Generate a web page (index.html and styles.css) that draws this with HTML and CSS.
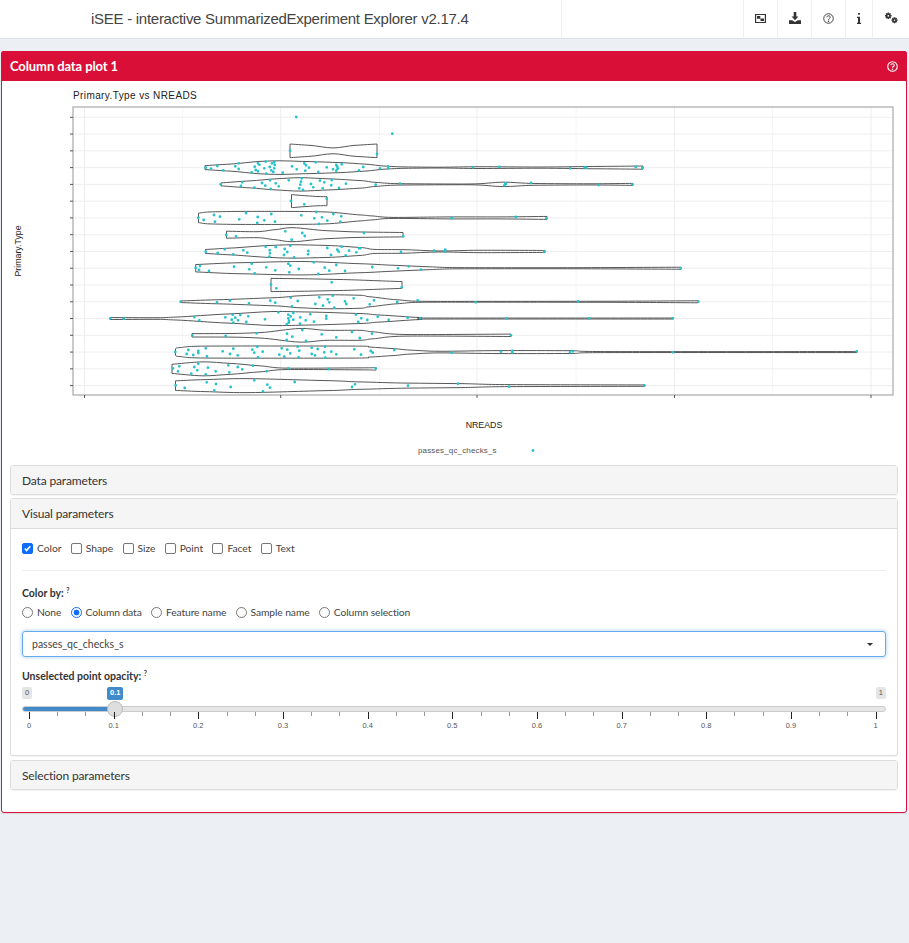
FILE: index.html
```html
<!DOCTYPE html>
<html lang="en">
<head>
<meta charset="utf-8">
<title>iSEE</title>
<link rel="stylesheet" href="styles.css">
</head>
<body>
<header class="navbar">
  <div class="brand">iSEE - interactive SummarizedExperiment Explorer v2.17.4</div>
  <nav class="tools">
    <a class="tool t-img"><svg viewBox="0 0 12 12" width="11" height="11"><path class="ic" fill-rule="evenodd" d="M0 1h12v10H0zM1.300 2.300v7.400h9.400V2.300z"/><path class="ic" d="M2.200 3.200h3.600v3H2.200zM6 6h3.800v2.800H6z"/></svg></a>
    <a class="tool t-dl"><svg viewBox="0 0 12 12" width="12" height="12"><path class="ic" d="M4.700 0h2.600v4.600h2.100L6 8.200 2.600 4.600h2.100zM0 8.200h3.200L6 10l2.800-1.800H12V12H0z"/></svg></a>
    <a class="tool t-q"><svg viewBox="0 0 12 12" width="11" height="11"><circle class="ln" cx="6" cy="6" r="5.200"/><path class="ln" d="M4.200 4.700C4.300 2.500 7.900 2.500 7.900 4.600 7.900 6 6 6 6 7.400"/><path class="ic" d="M5.300 8.300h1.400v1.400H5.300z"/></svg></a>
    <a class="tool t-i"><svg viewBox="0 0 6 12" width="6" height="11"><path class="ic" d="M2 0h2v2H2zM0.800 4h3.300v6.500h1.100V12H0.800v-1.500h1.100V5.500H.8z"/></svg></a>
    <a class="tool t-c"><svg viewBox="0 0 14 12" width="14" height="12"><g class="ln thick"><circle cx="4.300" cy="3.800" r="1.700"/><path d="M4.300 0.500v1.200M4.300 5.900v1.200M1 3.800h1.200M6.400 3.800h1.200M2 1.500l.8.800M5.800 5.300l.8.800M6.600 1.500l-.8.800M2.800 5.300l-.8.800"/><circle cx="10.500" cy="8.200" r="1.500"/><path d="M10.500 5.200v1.200M10.500 10v1.200M7.500 8.200h1.200M12.300 8.200h1.200M8.400 6.100l.8.800M11.800 9.500l.8.800M12.600 6.100l-.8.800M9.200 9.500l-.8.800"/></g></svg></a>
  </nav>
</header>

<main class="content">
  <section class="box">
    <div class="box-header">
      <h3 class="box-title">Column data plot 1</h3>
      <svg class="help" viewBox="0 0 12 12" width="11" height="11"><circle class="ln-w" cx="6" cy="6" r="5.200"/><path class="ln-w" d="M4.200 4.700C4.300 2.500 7.900 2.500 7.900 4.600 7.900 6 6 6 6 7.400"/><path class="fill-w" d="M5.300 8.300h1.400v1.400H5.300z"/></svg>
    </div>
    <div class="box-body">
      <svg id="plot" class="plot" viewBox="0 0 905 384" width="905" height="384">
        <text class="p-title" x="72" y="18">Primary.Type vs NREADS</text>
        <text class="p-axis" transform="translate(20 170) rotate(-90)" text-anchor="middle">Primary.Type</text>
        <text class="p-axis" x="483" y="347" text-anchor="middle">NREADS</text>
        <text class="p-legend" x="417" y="372">passes_qc_checks_s</text>
        <circle class="p-legdot" cx="532" cy="369.500" r="1.400"/>
        <g id="grid"></g>
        <g id="violins"></g>
        <g id="points"></g>
        <rect class="p-frame" x="72" y="26" width="820" height="288"/>
        <g id="ticks"></g>
      </svg>

      <div class="panel first">
        <div class="panel-heading">Data parameters</div>
      </div>

      <div class="panel">
        <div class="panel-heading open">Visual parameters</div>
        <div class="panel-body">
          <div class="checks">
            <label class="opt"><input type="checkbox" checked>Color</label>
            <label class="opt"><input type="checkbox">Shape</label>
            <label class="opt"><input type="checkbox">Size</label>
            <label class="opt"><input type="checkbox">Point</label>
            <label class="opt"><input type="checkbox">Facet</label>
            <label class="opt"><input type="checkbox">Text</label>
          </div>
          <hr class="rule">
          <div class="field-label">Color by: <sup>?</sup></div>
          <div class="radios">
            <label class="opt"><input type="radio" name="c">None</label>
            <label class="opt"><input type="radio" name="c" checked>Column data</label>
            <label class="opt"><input type="radio" name="c">Feature name</label>
            <label class="opt"><input type="radio" name="c">Sample name</label>
            <label class="opt"><input type="radio" name="c">Column selection</label>
          </div>
          <div class="select"><span>passes_qc_checks_s</span><i class="caret"></i></div>
          <div class="field-label op">Unselected point opacity: <sup>?</sup></div>
          <div class="slider">
            <div class="caps"><span class="cap">0</span><span class="cap">1</span></div>
            <span class="cap cur">0.1</span>
            <div class="track"><div class="fill"></div></div>
            <span class="handle"></span>
            <div class="scale">
              <b class="mj"><em>0</em></b><b></b><b></b><b class="mj"><em>0.1</em></b><b></b><b></b><b class="mj"><em>0.2</em></b><b></b><b></b><b class="mj"><em>0.3</em></b><b></b><b></b><b class="mj"><em>0.4</em></b><b></b><b></b><b class="mj"><em>0.5</em></b><b></b><b></b><b class="mj"><em>0.6</em></b><b></b><b></b><b class="mj"><em>0.7</em></b><b></b><b></b><b class="mj"><em>0.8</em></b><b></b><b></b><b class="mj"><em>0.9</em></b><b></b><b></b><b class="mj"><em>1</em></b>
            </div>
          </div>
        </div>
      </div>

      <div class="panel">
        <div class="panel-heading">Selection parameters</div>
      </div>
    </div>
  </section>
</main>
<script src="plot.js"></script>
</body>
</html>
```
FILE: styles.css
```css
* { box-sizing: border-box; }
html, body { margin: 0; padding: 0; }
body {
  background: #ecf0f5;
  color: #333;
  font-family: "Lato", "Noto Sans", sans-serif;
  width: 909px;
  height: 943px;
  overflow: hidden;
}
.navbar {
  height: 39px;
  background: #fff;
  border-bottom: 1px solid #dfe3e8;
  display: flex;
  justify-content: space-between;
  padding-left: 91px;
}
.brand {
  font-family: "Liberation Sans", sans-serif;
  font-size: 15px;
  letter-spacing: -.27px;
  line-height: 37px;
  color: #444;
  width: 471px;
  border-right: 1px solid #eef0f2;
}
.tools { display: flex; }
.tool {
  display: flex;
  align-items: center;
  justify-content: center;
  height: 38px;
  padding-bottom: 2px;
  border-left: 1px solid #eef0f2;
}
.t-img, .t-dl, .t-q { width: 34px; }
.t-i { width: 27px; }
.t-c { width: 37px; }
.ic { fill: #333; }
.ln { fill: none; stroke: #333; stroke-width: 1; }
.thick { stroke-width: 1.600; }
.ln-w { fill: none; stroke: #fff; stroke-width: 1.200; }
.fill-w { fill: #fff; }

.content { padding: 12px 2px 0 1px; }
.box {
  height: 762px;
  border: 1px solid #dc103a;
  border-radius: 3px;
  background: #fff;
  box-shadow: 0 1px 1px rgba(0,0,0,.1);
}
.box-header {
  height: 30px;
  margin: -1px -1px 0;
  background: #da0f37;
  border-radius: 3px 3px 0 0;
  color: #fff;
  display: flex;
  align-items: center;
  justify-content: space-between;
  padding: 0 9px;
}
.box-title { margin: 0; font-size: 13px; font-weight: 700; letter-spacing: -.1px; }
.box-body { padding: 0; }
.plot { display: block; margin-left: -1px; }
.plot text { font-family: "Liberation Sans", sans-serif; }
.p-title { font-size: 10px; letter-spacing: .4px; fill: #222; }
.p-axis { font-size: 8.800px; fill: #222; }
.p-legend { font-size: 8px; letter-spacing: .15px; fill: #555; }
.p-legdot { fill: #25c4cc; }
.p-frame { fill: none; stroke: #a8a8a8; stroke-width: 1.200; }
.g-maj { stroke: #eeeeee; stroke-width: 1; }
.g-min { stroke: #f6f6f6; stroke-width: 1; }
.tick { stroke: #555; stroke-width: 1; }
.violin { fill: #fff; fill-opacity: .6; stroke: #444; stroke-width: .9; }
.pts { fill: none; stroke: #25c4cc; stroke-width: 2.800; stroke-linecap: round; }

.panel {
  margin: 0 8px 4px;
  border: 1px solid #ddd;
  border-radius: 3px;
  box-shadow: 0 1px 1px rgba(0,0,0,.05);
  background: #fff;
}
.panel.first { margin-bottom: 3px; }
.panel-heading {
  height: 28px;
  padding: 0 11px;
  background: #f5f5f5;
  font-size: 12px;
  letter-spacing: -.15px;
  line-height: 29px;
  color: #333;
}
.panel-heading.open { height: 30px; line-height: 30px; border-bottom: 1px solid #ddd; }
.panel-body { height: 226px; padding: 12px 11px 0; }
.checks, .radios { display: flex; font-size: 10.300px; letter-spacing: -.05px; line-height: 14px; }
.opt { display: flex; align-items: center; color: #444; }
.opt input { margin: 0 4px 0 0; flex: none; appearance: none; width: 11px; height: 11px; background: #fff; border: 1px solid #777; }
.opt input[type=checkbox] { border-radius: 2px; }
.opt input[type=checkbox]:checked {
  border-color: #0d6efd;
  background: #0d6efd url("data:image/svg+xml,%3Csvg xmlns='http://www.w3.org/2000/svg' viewBox='0 0 10 10'%3E%3Cpath d='M2 5l2 2.200L8 2.500' fill='none' stroke='%23fff' stroke-width='1.800'/%3E%3C/svg%3E") center/100%;
}
.opt input[type=radio] { border-radius: 50%; }
.opt input[type=radio]:checked { border-color: #0d6efd; background: radial-gradient(circle, #0d6efd 0 2.600px, #fff 3.200px); }
.checks { gap: 9.400px; }
.radios { gap: 9.200px; margin-top: 5px; letter-spacing: -.1px; }
.rule { border: 0; border-top: 1px solid #eee; margin: 15px 0 15px; }
.field-label { font-size: 10.500px; font-weight: 700; line-height: 14px; color: #333; }
.field-label sup { font-size: 7px; line-height: 0; }
.select {
  height: 26px;
  margin-top: 12px;
  padding: 0 9px;
  display: flex;
  align-items: center;
  justify-content: space-between;
  border: 1px solid #66aae8;
  border-radius: 3px;
  box-shadow: 0 0 4px rgba(102,170,232,.6);
  font-size: 10.500px;
  color: #444;
}
.caret { width: 0; height: 0; margin-right: 3px; border: 3.500px solid transparent; border-top: 3.500px solid #333; border-bottom: 0; }
.op { margin-top: 12px; }
.slider { position: relative; margin-top: 4px; height: 46px; font-family: "Liberation Sans", sans-serif; }
.caps { display: flex; justify-content: space-between; padding-left: 0; }
.cap { display: block; height: 12px; padding: 0 3px; border-radius: 2px; background: #e5e5e5; color: #555; font-size: 7.500px; line-height: 11px; }
.cur { position: absolute; left: 85px; top: 0; height: 13px; background: #428bca; color: #fff; font-weight: 700; }
.track { height: 6px; margin-top: 7px; border: 1px solid #ccc; border-radius: 3px; background: #e6e6e6; overflow: hidden; }
.fill { width: 93px; height: 6px; margin: -1px; background: #428bca; }
.handle { position: absolute; left: 85px; top: 14px; width: 16px; height: 16px; border-radius: 50%; background: #dedede; border: 1px solid #bbb; }
.scale { display: flex; justify-content: space-between; margin: 0 9px 0 7px; height: 7px; }
.scale b { display: block; width: 1px; height: 4px; background: #999; position: relative; font-weight: 400; }
.scale b.mj { height: 7px; background: #222; }
.scale em { position: absolute; top: 9px; left: -10px; width: 20px; text-align: center; font-style: normal; font-size: 7.500px; line-height: 9px; color: #555; }
```
FILE: plot.js
```js
(function () {
  var NS = 'http://www.w3.org/2000/svg';
  var OX = 1, OY = 81; // page offset of the svg
  var rowY = function (i) { return 117.3 + 16.77 * i - OY; };

  function el(parent, name, attrs) {
    var e = document.createElementNS(NS, name);
    for (var k in attrs) e.setAttribute(k, attrs[k]);
    parent.appendChild(e);
    return e;
  }

  var grid = document.getElementById('grid');
  var ticks = document.getElementById('ticks');
  [84.5, 280.7, 477, 674.5, 871].forEach(function (x) {
    el(grid, 'line', { 'class': 'g-maj', x1: x - OX, x2: x - OX, y1: 26, y2: 314 });
    el(ticks, 'line', { 'class': 'tick', x1: x - OX, x2: x - OX, y1: 314, y2: 317 });
  });
  [182.7, 379.5, 576, 772.5].forEach(function (x) {
    el(grid, 'line', { 'class': 'g-min', x1: x - OX, x2: x - OX, y1: 26, y2: 314 });
  });
  for (var i = 0; i < 17; i++) {
    el(grid, 'line', { 'class': 'g-maj', x1: 72, x2: 892, y1: rowY(i), y2: rowY(i) });
    el(ticks, 'line', { 'class': 'tick', x1: 69, x2: 72, y1: rowY(i), y2: rowY(i) });
  }

  var violins = {
    2: [[290,6.8],[310,5.5],[333,2.9],[355,5.5],[377,6.8]],
    3: [[205,2],[230,3.5],[260,6.2],[280,6.8],[310,6],[340,5],[365,3.5],[385,1.5],[405,.7],[440,.4],[480,.9],[540,.6],[600,1.2],[643,1.6]],
    4: [[221,1.5],[250,3.5],[275,5.5],[300,6.7],[330,5.5],[360,3.8],[376,2],[400,.7],[470,.4],[503,2.2],[535,.9],[590,.6],[633,1]],
    5: [[291.5,6.5],[306,5.4],[318,4.6],[327,4.5]],
    6: [[198.5,4.7],[210,6],[240,6.5],[290,6.5],[325,6],[360,3],[372,2],[393,.5],[450,1],[500,1],[547,1.5]],
    7: [[226.5,3.5],[257,3],[275,5],[293,7],[327,4],[360,2.7],[403,2.2]],
    8: [[205.5,2],[235,3.6],[265,5.8],[293,6.7],[327,6],[360,4],[375,2],[403,1.8],[440,.5],[480,1.2],[545,1]],
    9: [[195.7,3.7],[240,5.5],[303,6.7],[360,4.5],[393,3],[427,1.5],[460,.6],[560,.5],[681,1]],
    10: [[271,6.6],[300,6.3],[340,5.5],[402,3.4]],
    11: [[180.5,.8],[217,2],[273,4],[300,6],[327,7],[360,6.5],[370,5],[397,2],[420,.5],[480,.4],[600,.5],[698,1]],
    12: [[110,1],[157,.8],[177,1.5],[227,4.5],[273,7],[310,6.5],[360,5],[380,3.5],[420,1],[440,.5],[673,.5]],
    13: [[192,1.7],[230,1.8],[260,2.7],[300,6.8],[327,5],[360,5],[373,3.5],[407,.8],[511,1.2]],
    14: [[175.5,3.3],[180,4.5],[210,6],[353,6],[370,5],[393,3.5],[410,2],[440,.8],[500,1.5],[570,1.4],[610,.5],[857,.5]],
    15: [[172,4.6],[203,7],[230,5.5],[260,3],[287,.7],[360,1],[376,1.3]],
    16: [[175.5,4.8],[205,6],[247,7],[327,5],[360,3.7],[408,2.5],[460,2],[510,1],[645,.7]]
  };

  // Catmull-Rom through the outline points, clamped by construction to be gentle
  function spline(pts) {
    var d = '';
    for (var i = 0; i < pts.length - 1; i++) {
      var p0 = pts[Math.max(i - 1, 0)], p1 = pts[i], p2 = pts[i + 1], p3 = pts[Math.min(i + 2, pts.length - 1)];
      var k = 1 / 6;
      d += 'C' + (p1[0] + (p2[0] - p0[0]) * k).toFixed(1) + ' ' + (p1[1] + (p2[1] - p0[1]) * k * 0.6).toFixed(2) + ' ' +
        (p2[0] - (p3[0] - p1[0]) * k).toFixed(1) + ' ' + (p2[1] - (p3[1] - p1[1]) * k * 0.6).toFixed(2) + ' ' +
        p2[0].toFixed(1) + ' ' + p2[1].toFixed(2);
    }
    return d;
  }

  var vg = document.getElementById('violins');
  Object.keys(violins).forEach(function (r) {
    var y = rowY(+r), prof = violins[r];
    var top = prof.map(function (p) { return [p[0] - OX, y - p[1]]; });
    var bot = prof.map(function (p) { return [p[0] - OX, y + p[1]]; }).reverse();
    var d = 'M' + top[0][0] + ' ' + top[0][1] + spline(top) + 'L' + bot[0][0] + ' ' + bot[0][1] + spline(bot) + 'Z';
    el(vg, 'path', { 'class': 'violin', d: d });
  });

  // Points are noted in the coordinates of 3x crops: [crop x, crop y, list of x,y]
  var crops = [
    [60, 100, [709,51, 690,152,
      437,203,453,206,472,198,490,211,526,199,536,190,536,207,575,217,584,200,587,210,594,190,598,194,594,214,613,205,617,185,619,221,629,201,636,190,643,186,644,195,643,205,634,211,640,216,668,218,696,199,710,208,733,190,738,196,747,203,736,212,767,187,775,216,800,202,819,208,829,195,832,200,833,206,829,212,845,193,897,211,
      482,253,547,247,543,258,583,263,606,249,616,257,630,241,647,250,656,259,632,267,686,241,725,235,723,245,721,254,718,265,729,270,753,252,760,262,780,242,793,247,788,265,815,240,814,256,837,264,858,251,
      800,296,693,303,733,313,
      415,353,431,360,462,345,465,365,480,350,538,358,558,339,593,351,592,369,613,361,634,342,645,365,724,346,769,336,763,355,786,352,777,372,802,362,820,342,844,349,841,365,
      499,405,528,409,676,394,727,399,734,408,695,419,
      437,455,473,459,494,448,520,463,550,451,562,458,617,440,629,451,630,460,628,470,647,441,674,447,682,456,672,465,691,437,702,472,745,453,744,463,802,444,832,449,836,455,813,465,845,440,867,452,889,457,857,466,897,445]],
    [360, 100, [97,101, 51,162,
      10,201,60,205,84,199,85,205,339,202,418,201,631,205,674,202,679,203,827,201,847,204,
      47,254,120,251,433,256,436,250,438,252,513,249,716,255,817,253,
      275,354,467,351,559,355,
      12,399,130,409,
      1,445,123,456,222,452,254,455,256,449,553,455]],
    [60, 250, [407,54,420,48,417,60,447,63,522,50,575,41,568,58,584,70,619,52,646,61,685,41,691,47,688,67,716,57,761,37,775,72,794,53,808,62,829,45,855,63,
      633,104,649,115,815,97,
      362,155,471,157,510,152,567,160,631,152,646,158,692,143,713,153,696,169,766,162,778,142,803,148,808,157,789,167,818,137,823,173,855,154,859,162,881,145,
      151,205,191,206,403,201,418,211,496,202,518,194,515,209,526,203,541,195,534,211,520,218,565,199,559,216,615,208,655,187,685,194,692,199,685,205,700,189,700,209,687,212,686,218,680,223,721,202,720,221,737,211,751,193,762,215,799,198,799,206,888,194,895,216,
      397,256,497,258,590,250,681,251,697,260,680,270,727,240,738,273,785,253,829,262,876,246,899,264,
      346,306,385,300,380,312,415,303,415,309,400,315,437,295,441,319,488,304,510,312,520,296,533,316,577,299,583,308,592,290,594,322,608,305,658,314,665,295,673,320,682,299,691,310,713,290,716,322,718,302,755,293,755,312,765,316,773,297,793,307,795,290,796,323,814,305,829,313,883,298,
      339,355,358,349,354,364,403,351,415,341,412,361,394,371,437,373,444,353,467,364,505,346,508,367,533,351,547,358,579,347,620,364,685,355,807,357,
      347,406,374,414,440,397,468,402,463,421,512,411,583,391,622,404,630,413,609,424,704,396,876,411,885,403]],
    [360, 250, [37,51,114,55,146,49,183,59,
      125,112,
      42,151,29,163,112,156,173,151,347,157,654,154,
      4,205,22,210,53,200,86,210,143,203,181,205,439,205,688,205,
      36,251,0,265,453,256,
      3,314,32,303,38,308,103,300,275,308,423,305,457,303,457,307,630,307,639,304,
      47,355,
      144,407,294,401,447,410,853,406]],
    [650, 100, [92,505,145,605,69,655,69,757,620,754]]
  ];
  var d = '';
  crops.forEach(function (c) {
    for (var i = 0; i < c[2].length; i += 2) {
      d += 'M' + (c[0] + c[2][i] / 3 - OX).toFixed(1) + ' ' + (c[1] + c[2][i + 1] / 3 - OY).toFixed(1) + 'h0';
    }
  });
  el(document.getElementById('points'), 'path', { 'class': 'pts', d: d });
})();
```
